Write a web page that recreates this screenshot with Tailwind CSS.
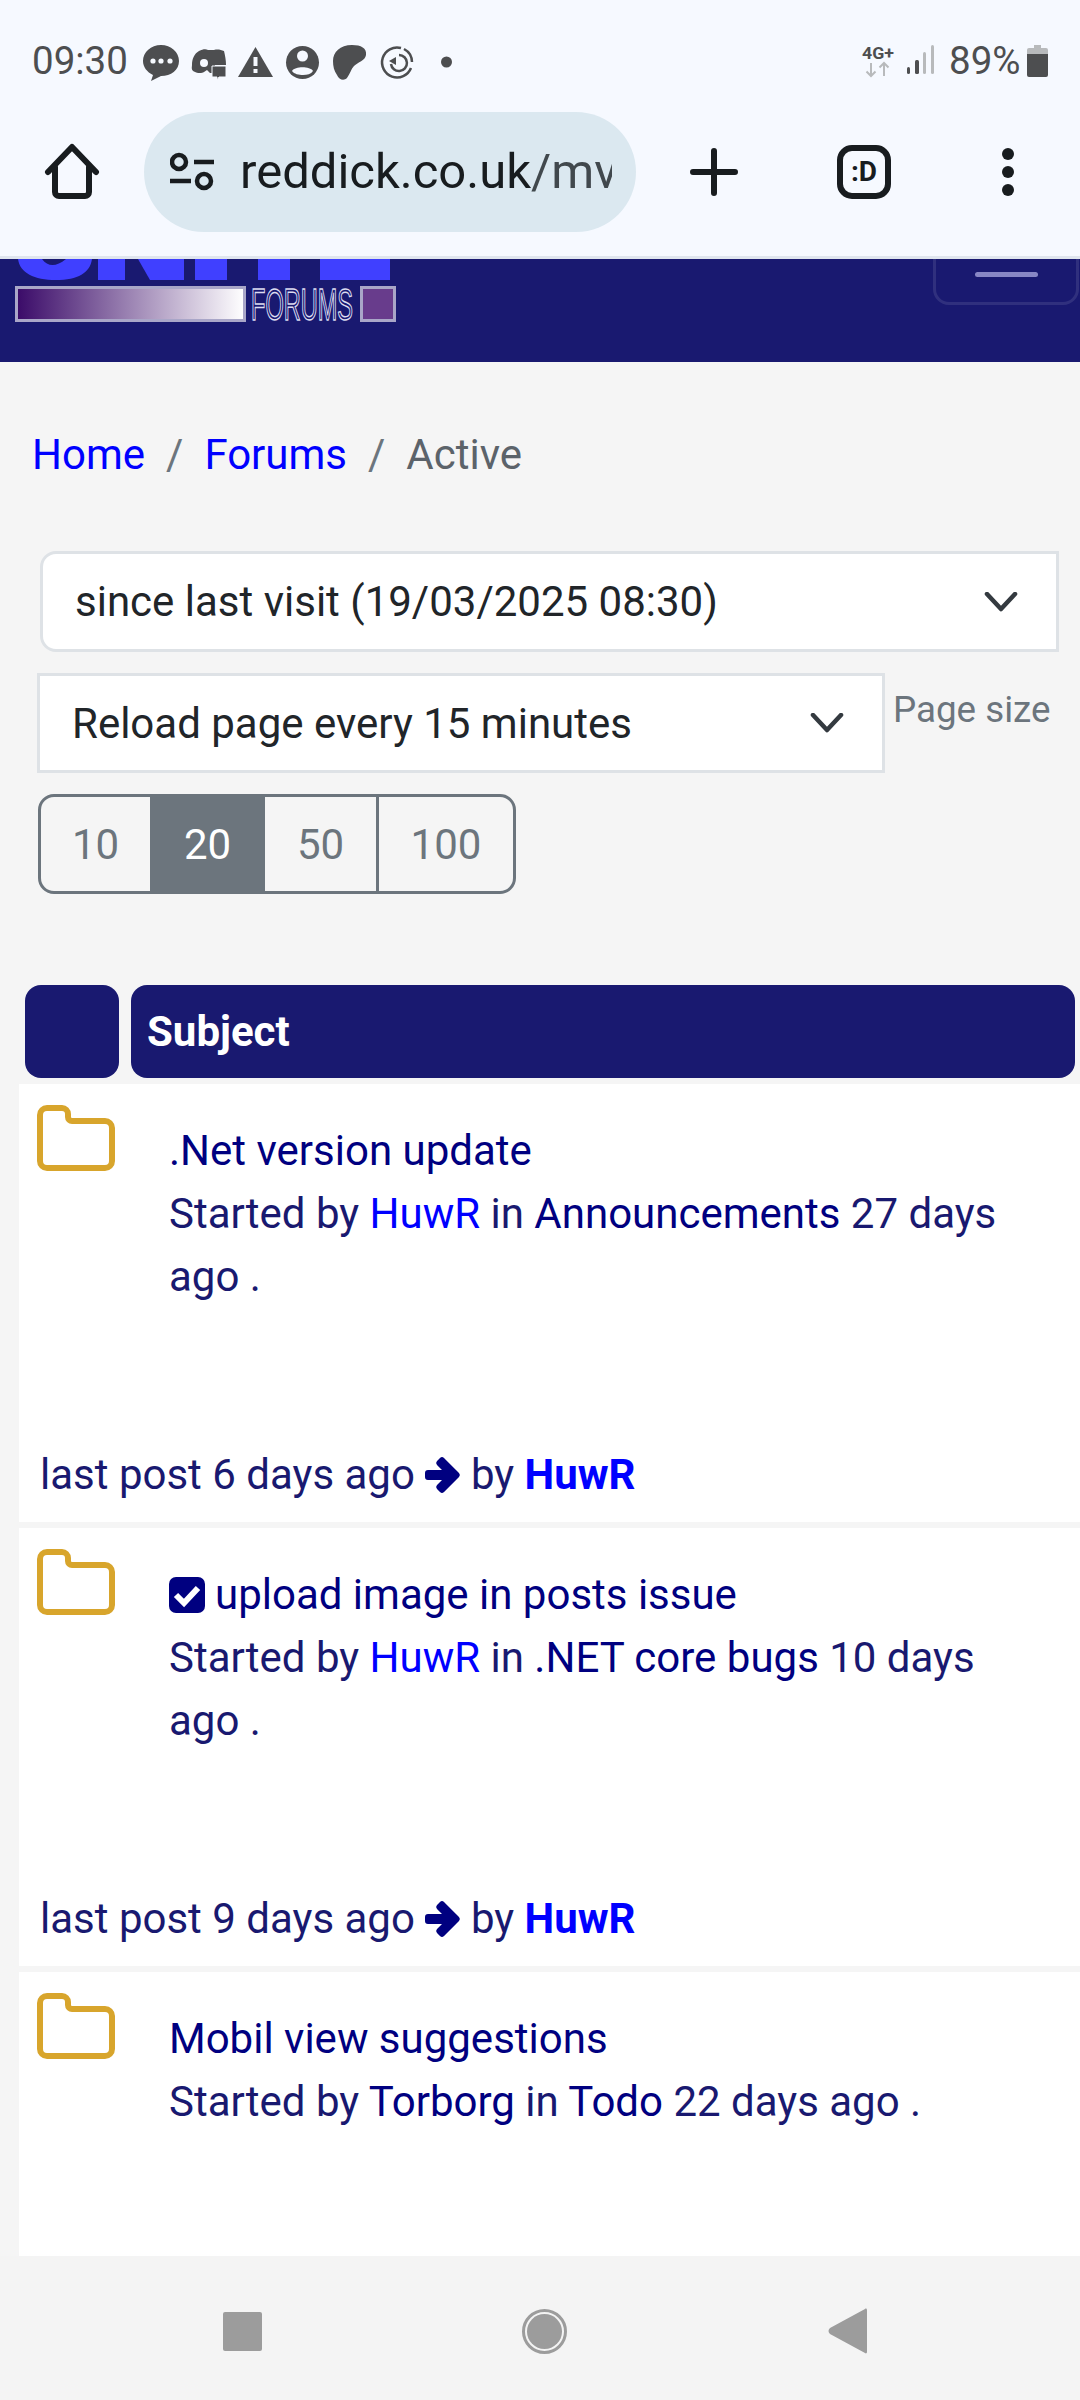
<!DOCTYPE html>
<html lang="en">
<head>
    <meta charset="UTF-8">
    <meta name="viewport" content="width=device-width, initial-scale=1.0">
    <title>Active Topics</title>
    <script src="https://cdn.jsdelivr.net/npm/@tailwindcss/browser@4"></script>
</head>
<body class="w-[1080px] h-[2400px] overflow-hidden bg-[#f5f5f5] font-[Roboto,sans-serif] text-[42px] leading-[63px] flex flex-col">

    <!-- status bar -->
    <div class="h-[112px] bg-[#f6f9ff] flex items-center justify-between pl-[32px] pr-[32px] text-[#4d4e50] text-[38.500px] shrink-0 pt-[10px]">
        <div class="flex items-center">
            <span class="w-[98px] leading-none">09:30</span>
            <svg width="340" height="80" viewBox="130 20 340 80" fill="#4d4e50">
                <path d="M161 44c10 0 18 7 18 16s-8 15-18 15l-10 5 2-6c-6-3-10-8-10-14 0-9 8-16 18-16z"/>
                <circle cx="153" cy="60" r="2.600" fill="#f6f9ff"/><circle cx="161" cy="60" r="2.600" fill="#f6f9ff"/><circle cx="170" cy="60" r="2.600" fill="#f6f9ff"/>
                <path d="M199 50c4-2 7-2 9-1h6c4-1 7 0 10 1 1 4 2 9 2 14h-11v8h-5l-3-3-3 2c-3 2-8 1-11-1-2-2-1-4-1-6 0-6 2-11 7-14z"/>
                <circle cx="204" cy="62" r="4" fill="#f6f9ff"/>
                <path d="M212 65h14v11h-7l-2 3v-3h-5z" stroke="#f6f9ff" stroke-width="1"/>
                <path d="M255.500 46l17.500 30h-35z"/>
                <rect x="253.500" y="56" width="4" height="9" fill="#f6f9ff"/><rect x="253.500" y="68" width="4" height="4" fill="#f6f9ff"/>
                <circle cx="302.500" cy="61.500" r="16.500"/>
                <circle cx="302.500" cy="55" r="5.500" fill="#f6f9ff"/>
                <path d="M292 70c3-5 18-5 21 0-2 3-6 4-10 4s-9-1-11-4z" fill="#f6f9ff"/>
                <path d="M333 60c0-9 7-16 19-16 9 0 15 3 14 10-1 6-8 7-12 11-3 3-4 8-7 12-3 3-8 2-10-3-3-4-4-9-4-14z"/>
                <g fill="none" stroke="#4d4e50" stroke-width="2.500">
                    <path d="M401 47a15 15 0 1 0 10 20"/>
                    <path d="M404 48a15 15 0 0 1 8 13"/>
                    <path d="M399 54a8 8 0 1 1-8 9"/>
                </g>
                <path d="M389 60l7-4v8z"/>
                <circle cx="446.500" cy="61" r="5.500"/>
            </svg>
        </div>
        <div class="flex items-center">
            <svg width="76" height="40" viewBox="860 42 76 40">
                <text x="862" y="60" font-size="17" font-weight="700" fill="#4d4e50" font-family="Roboto" textLength="32" lengthAdjust="spacingAndGlyphs">4G+</text>
                <path d="M871 64v13m-4.500-4.500l4.500 4.500 4.500-4.500M884 77V64m-4.500 4.500L884 64l4.500 4.500" fill="none" stroke="#b8babc" stroke-width="2"/>
                <rect x="907" y="68" width="3" height="7" rx="1.500" fill="#4d4e50"/>
                <rect x="915" y="61" width="4" height="14" rx="1.500" fill="#4d4e50"/>
                <rect x="923" y="53" width="3" height="22" rx="1.500" fill="#b8babc"/>
                <rect x="931" y="46" width="3" height="29" rx="1.500" fill="#b8babc"/>
            </svg>
            <span class="ml-[13px] w-[78px] leading-none">89%</span>
            <svg width="21" height="32" viewBox="0 0 21 32">
                <path d="M7 0h7v3h5a2 2 0 0 1 2 2v4H0V5a2 2 0 0 1 2-2h5z" fill="#b8babc"/>
                <path d="M0 9h21v21a2 2 0 0 1-2 2H2a2 2 0 0 1-2-2z" fill="#4d4e50"/>
            </svg>
        </div>
    </div>

    <!-- browser toolbar -->
    <div class="h-[147px] bg-[#f6f9ff] border-b-[3px] border-[#dfe5ee] flex items-start shrink-0 relative">
        <svg class="ml-[44px] mt-[31px]" width="56" height="58" viewBox="0 0 56 58" fill="none" stroke="#181c1f" stroke-width="6" stroke-linecap="round" stroke-linejoin="round">
            <path d="M4 29L28 4l24 25M11 24v25a4 4 0 0 0 4 4h26a4 4 0 0 0 4-4V24"/>
        </svg>
        <div class="ml-[44px] w-[492px] h-[120px] rounded-[60px] bg-[#dbe8f0] flex items-center pl-[26px]">
            <svg class="shrink-0" width="44" height="40" viewBox="0 0 44 40" fill="none" stroke="#181c1f" stroke-width="4.500">
                <circle cx="9" cy="10" r="7"/><circle cx="34" cy="29" r="7"/>
                <path d="M24 10h21M0 29h21"/>
            </svg>
            <div class="ml-[26px] w-[372px] h-[60px] overflow-hidden whitespace-nowrap text-[49px] leading-[60px] text-[#181c1f]">reddick.co.uk<span class="text-[#41484d]">/mvc/Forums/Active</span></div>
        </div>
        <svg class="ml-[54px] mt-[36px]" width="48" height="48" viewBox="0 0 48 48" stroke="#181c1f" stroke-width="6" stroke-linecap="round">
            <path d="M24 3v42M3 24h42"/>
        </svg>
        <div class="ml-[99px] mt-[33px] w-[54px] h-[54px] border-[6px] border-[#181c1f] rounded-[15px] flex items-center justify-center text-[#181c1f] text-[28px] leading-none font-bold">:D</div>
        <div class="ml-[111px] mt-[36px] flex flex-col gap-[6px]">
            <span class="block w-[12px] h-[12px] rounded-full bg-[#181c1f]"></span>
            <span class="block w-[12px] h-[12px] rounded-full bg-[#181c1f]"></span>
            <span class="block w-[12px] h-[12px] rounded-full bg-[#181c1f]"></span>
        </div>
    </div>

    <!-- site header, scrolled so only the bottom shows -->
    <div class="h-[103px] bg-[#191970] shrink-0 relative overflow-hidden">
        <svg class="absolute left-0 top-0" width="420" height="70" viewBox="0 259 420 70">
            <g fill="#4040ff">
                <path d="M18 259h24c6 8 14 8 24 0h26c-2 14-14 21-36 21-22 0-36-7-38-21z"/>
                <rect x="98" y="259" width="27" height="21"/>
                <path d="M138 259h46v21h-34z"/>
                <rect x="195" y="259" width="32" height="21"/>
                <rect x="258" y="259" width="32" height="21"/>
                <rect x="320" y="259" width="70" height="21"/>
            </g>
            <defs>
                <linearGradient id="logoFade">
                    <stop offset="0" stop-color="#3a0a68"/>
                    <stop offset="1" stop-color="#ffffff"/>
                </linearGradient>
            </defs>
            <rect x="16.500" y="287.500" width="228" height="33" fill="url(#logoFade)" stroke="#a9a6c8" stroke-width="3"/>
            <text x="251" y="320" font-size="44" fill="none" stroke="#dcdcf0" stroke-width="1.500" font-family="Liberation Sans" textLength="102" lengthAdjust="spacingAndGlyphs">FORUMS</text>
            <rect x="361.500" y="287.500" width="33" height="33" fill="#683c8c" stroke="#a9a6c8" stroke-width="3"/>
        </svg>
        <div class="absolute left-[933px] top-[-60px] w-[146px] h-[106px] border-[3px] border-white/10 rounded-[16px]"></div>
        <div class="absolute left-[975px] top-[13px] w-[63px] h-[5px] rounded-full bg-[#8887c5]"></div>
    </div>

    <!-- breadcrumb -->
    <nav class="flex items-center pl-[32px] mt-[61px] h-[63px] shrink-0">
        <a class="text-[#0000ff]">Home</a>
        <span class="text-[#6c757d] mx-[21px]">/</span>
        <a class="text-[#0000ff]">Forums</a>
        <span class="text-[#6c757d] mx-[21px]">/</span>
        <span class="text-[#5c636a]">Active</span>
    </nav>

    <!-- filters -->
    <div class="ml-[40px] mt-[65px] w-[1019px] h-[101px] bg-white border-[3px] border-[#dee2e6] rounded-l-[16px] flex items-center justify-between pl-[32px] pr-[38px] text-[#212529] shrink-0">
        <span>since last visit (19/03/2025 08:30)</span>
        <svg width="34" height="20" viewBox="0 0 34 20" fill="none" stroke="#343a40" stroke-width="4.500" stroke-linecap="round" stroke-linejoin="round"><path d="M3 2l14 15L31 2"/></svg>
    </div>
    <div class="flex mt-[21px] ml-[37px] shrink-0">
        <div class="w-[848px] h-[100px] bg-white border-[3px] border-[#dee2e6] flex items-center justify-between pl-[32px] pr-[38px] text-[#212529]">
            <span>Reload page every 15 minutes</span>
            <svg width="34" height="20" viewBox="0 0 34 20" fill="none" stroke="#343a40" stroke-width="4.500" stroke-linecap="round" stroke-linejoin="round"><path d="M3 2l14 15L31 2"/></svg>
        </div>
        <span class="ml-[8px] text-[36.750px] leading-[56px] text-[#6c757d] mt-[9px]">Page size</span>
    </div>
    <div class="ml-[38px] mt-[21px] w-[478px] h-[100px] border-[3px] border-[#6c757d] rounded-[16px] overflow-hidden flex text-[#6c757d] shrink-0">
        <div class="w-[109px] flex items-center justify-center">10</div>
        <div class="w-[115px] flex items-center justify-center bg-[#6c757d] text-white">20</div>
        <div class="w-[114px] flex items-center justify-center border-r-[3px] border-[#6c757d]">50</div>
        <div class="flex-1 flex items-center justify-center">100</div>
    </div>

    <!-- topic list header -->
    <div class="flex mt-[91px] ml-[25px] gap-[12px] h-[93px] shrink-0">
        <div class="w-[94px] bg-[#191970] rounded-[16px]"></div>
        <div class="w-[944px] bg-[#191970] rounded-[16px] pl-[16px] flex items-center text-white font-bold">Subject</div>
    </div>

    <!-- topics -->
    <div class="ml-[19px] mt-[6px] flex flex-col gap-[6px] text-[#191970] shrink-0">
        <div class="h-[438px] bg-white flex flex-col justify-between">
            <div class="flex">
                <svg class="ml-[18px] mt-[21px] shrink-0" width="78" height="66" viewBox="0 0 78 66" fill="none" stroke="#d8a52c" stroke-width="6" stroke-linejoin="round"><path d="M3 10a7 7 0 0 1 7-7h15a6 6 0 0 1 6 6v3a4 4 0 0 0 4 4h33a7 7 0 0 1 7 7v33a7 7 0 0 1-7 7H10a7 7 0 0 1-7-7z"/></svg>
                <div class="ml-[54px] mt-[35px] w-[860px]">
                    <a class="block text-[#000080]">.Net version update</a>
                    <div>Started by <a class="text-[#0000ff]">HuwR</a> in <a class="text-[#000080]">Announcements</a> 27 days ago .</div>
                </div>
            </div>
            <div class="pl-[21px] pb-[16px] flex items-center">
                <span>last post 6 days ago</span>
                <svg class="mx-[10px]" width="36" height="38" viewBox="0 0 36 38" fill="#000080"><path d="M19 2l15 15a3 3 0 0 1 0 4L19 36a3 3 0 0 1-4 0l-3-3a3 3 0 0 1 0-4l5-5H3a3 3 0 0 1-3-3v-4a3 3 0 0 1 3-3h14l-5-5a3 3 0 0 1 0-4l3-3a3 3 0 0 1 4 0z"/></svg>
                <span>by&nbsp;<a class="text-[#0000ff] font-bold">HuwR</a></span>
            </div>
        </div>

        <div class="h-[438px] bg-white flex flex-col justify-between">
            <div class="flex">
                <svg class="ml-[18px] mt-[21px] shrink-0" width="78" height="66" viewBox="0 0 78 66" fill="none" stroke="#d8a52c" stroke-width="6" stroke-linejoin="round"><path d="M3 10a7 7 0 0 1 7-7h15a6 6 0 0 1 6 6v3a4 4 0 0 0 4 4h33a7 7 0 0 1 7 7v33a7 7 0 0 1-7 7H10a7 7 0 0 1-7-7z"/></svg>
                <div class="ml-[54px] mt-[35px] w-[860px]">
                    <div class="flex items-center text-[#000080]">
                        <svg class="mr-[10px]" width="36" height="36" viewBox="0 0 36 36"><rect width="36" height="36" rx="7" fill="#000080"/><path d="M7 18l8 8L29 11" fill="none" stroke="#fff" stroke-width="6"/></svg>
                        <a>upload image in posts issue</a>
                    </div>
                    <div>Started by <a class="text-[#0000ff]">HuwR</a> in <a class="text-[#000080]">.NET core bugs</a> 10 days ago .</div>
                </div>
            </div>
            <div class="pl-[21px] pb-[16px] flex items-center">
                <span>last post 9 days ago</span>
                <svg class="mx-[10px]" width="36" height="38" viewBox="0 0 36 38" fill="#000080"><path d="M19 2l15 15a3 3 0 0 1 0 4L19 36a3 3 0 0 1-4 0l-3-3a3 3 0 0 1 0-4l5-5H3a3 3 0 0 1-3-3v-4a3 3 0 0 1 3-3h14l-5-5a3 3 0 0 1 0-4l3-3a3 3 0 0 1 4 0z"/></svg>
                <span>by&nbsp;<a class="text-[#0000ff] font-bold">HuwR</a></span>
            </div>
        </div>

        <div class="h-[284px] bg-white">
            <div class="flex">
                <svg class="ml-[18px] mt-[21px] shrink-0" width="78" height="66" viewBox="0 0 78 66" fill="none" stroke="#d8a52c" stroke-width="6" stroke-linejoin="round"><path d="M3 10a7 7 0 0 1 7-7h15a6 6 0 0 1 6 6v3a4 4 0 0 0 4 4h33a7 7 0 0 1 7 7v33a7 7 0 0 1-7 7H10a7 7 0 0 1-7-7z"/></svg>
                <div class="ml-[54px] mt-[35px] w-[860px]">
                    <a class="block text-[#000080]">Mobil view suggestions</a>
                    <div>Started by <a class="text-[#000080]">Torborg</a> in <a class="text-[#000080]">Todo</a> 22 days ago .</div>
                </div>
            </div>
        </div>
    </div>

    <!-- android nav bar -->
    <div class="flex-1 bg-[#f4f4f4] relative">
        <div class="absolute left-[223px] top-[56px] w-[39px] h-[39px] rounded-[2px] bg-[#9c9c9c]"></div>
        <div class="absolute left-[522px] top-[53px] w-[45px] h-[45px] rounded-full border-[3px] border-[#9c9c9c] p-[2px]">
            <div class="w-full h-full rounded-full bg-[#9c9c9c]"></div>
        </div>
        <svg class="absolute left-[828px] top-[52px]" width="40" height="46" viewBox="0 0 40 46" fill="#9c9c9c"><path d="M37 1c1-1 2 0 2 1v42c0 1-1 2-2 1L2 26c-2-2-2-4 0-6z"/></svg>
    </div>
</body>
</html>
